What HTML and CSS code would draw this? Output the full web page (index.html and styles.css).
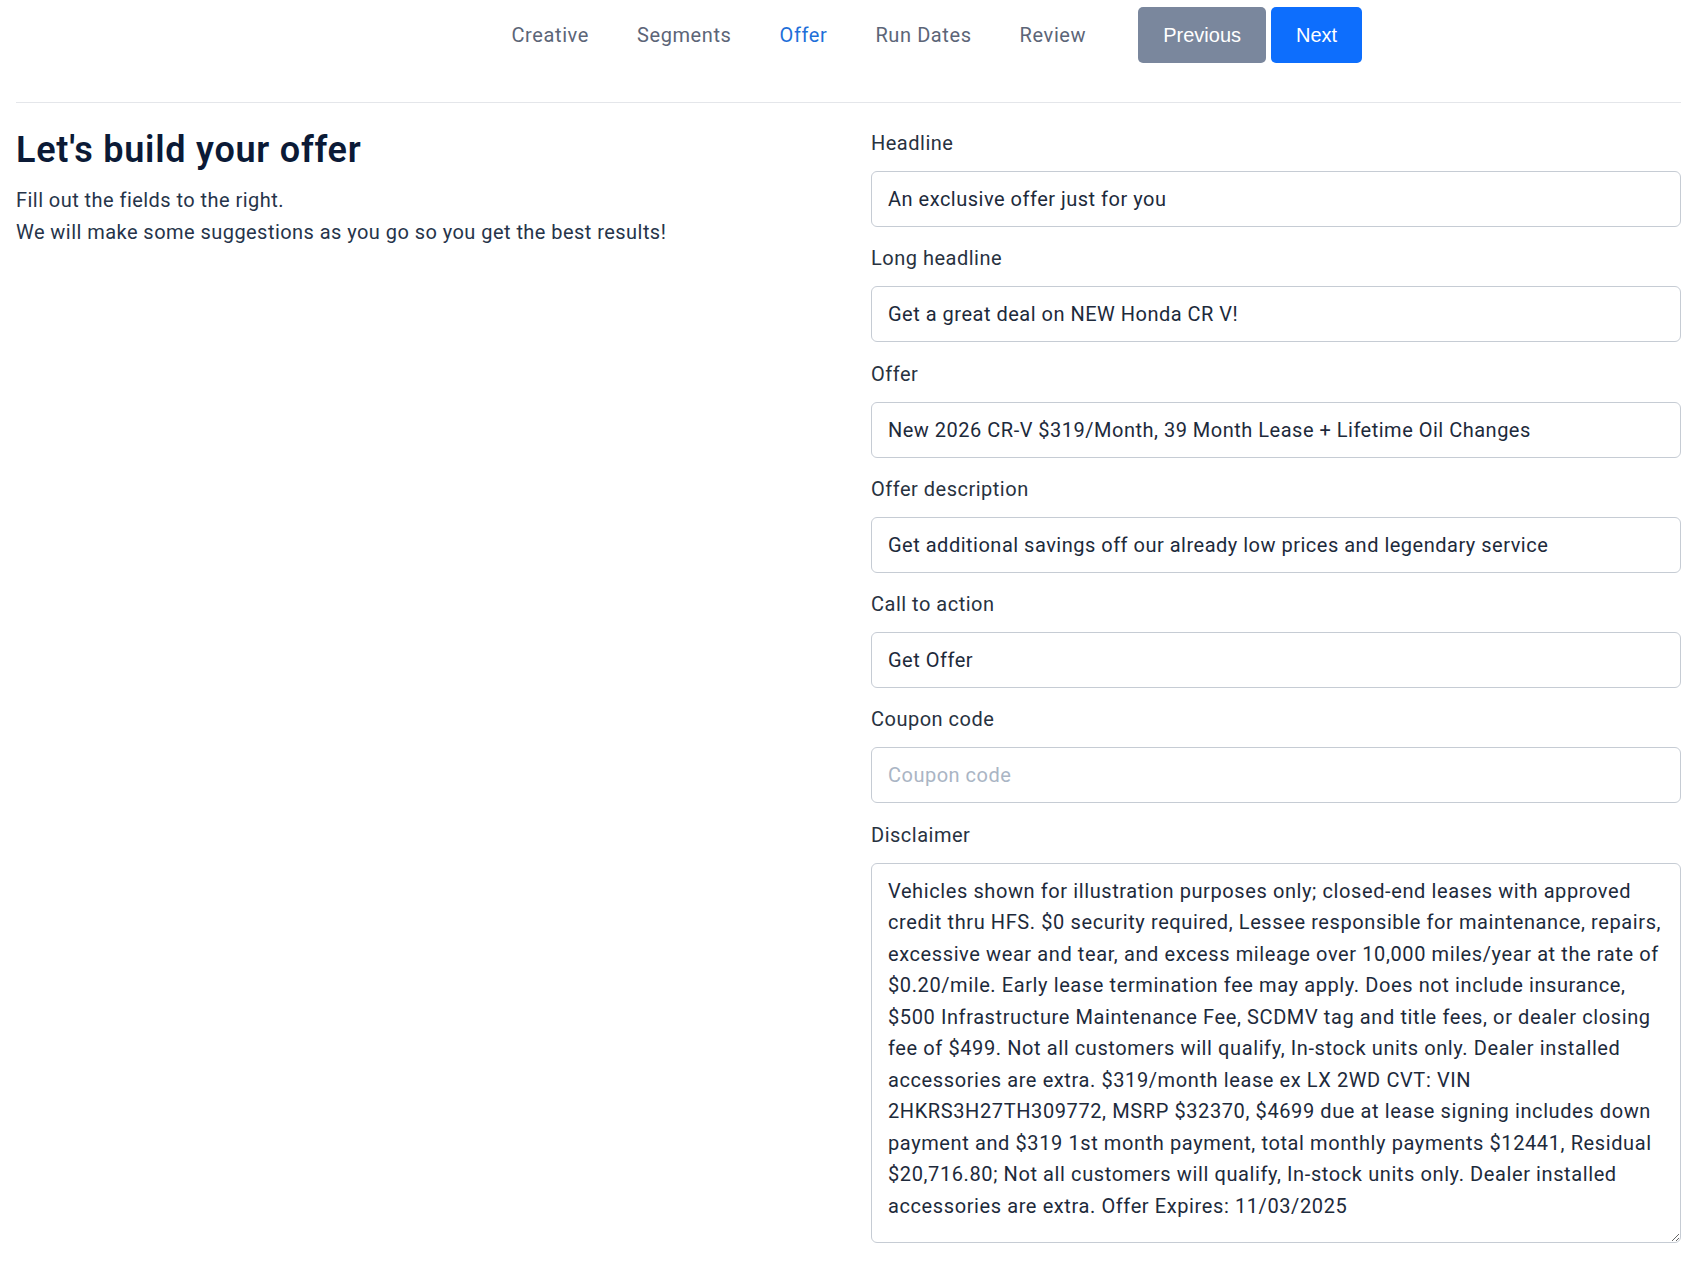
FILE: index.html
```html
<!DOCTYPE html>
<html lang="en">
<head>
<meta charset="utf-8">
<title>Offer</title>
<link rel="stylesheet" href="styles.css">
</head>
<body>
<div class="page">
  <header class="topbar">
    <nav class="steps">
      <a class="step" href="#">Creative</a>
      <a class="step" href="#">Segments</a>
      <a class="step active" href="#">Offer</a>
      <a class="step" href="#">Run Dates</a>
      <a class="step" href="#">Review</a>
    </nav>
    <div class="actions">
      <button class="btn btn-prev" type="button">Previous</button>
      <button class="btn btn-next" type="button">Next</button>
    </div>
  </header>

  <main class="content">
    <section class="intro">
      <h1 class="title">Let's build your offer</h1>
      <p class="lead">Fill out the fields to the right.<br>We will make some suggestions as you go so you get the best results!</p>
    </section>

    <form class="fields">
      <div class="field">
        <label class="label">Headline</label>
        <input class="input" type="text" value="An exclusive offer just for you">
      </div>
      <div class="field">
        <label class="label">Long headline</label>
        <input class="input" type="text" value="Get a great deal on NEW Honda CR V!">
      </div>
      <div class="field">
        <label class="label">Offer</label>
        <input class="input" type="text" value="New 2026 CR-V $319/Month, 39 Month Lease + Lifetime Oil Changes">
      </div>
      <div class="field">
        <label class="label">Offer description</label>
        <input class="input" type="text" value="Get additional savings off our already low prices and legendary service">
      </div>
      <div class="field">
        <label class="label">Call to action</label>
        <input class="input" type="text" value="Get Offer">
      </div>
      <div class="field">
        <label class="label">Coupon code</label>
        <input class="input" type="text" placeholder="Coupon code">
      </div>
      <div class="field">
        <label class="label">Disclaimer</label>
        <textarea class="input area" wrap="off">Vehicles shown for illustration purposes only; closed-end leases with approved
credit thru HFS. $0 security required, Lessee responsible for maintenance, repairs,
excessive wear and tear, and excess mileage over 10,000 miles/year at the rate of
$0.20/mile. Early lease termination fee may apply. Does not include insurance,
$500 Infrastructure Maintenance Fee, SCDMV tag and title fees, or dealer closing
fee of $499. Not all customers will qualify, In-stock units only. Dealer installed
accessories are extra. $319/month lease ex LX 2WD CVT: VIN
2HKRS3H27TH309772, MSRP $32370, $4699 due at lease signing includes down
payment and $319 1st month payment, total monthly payments $12441, Residual
$20,716.80; Not all customers will qualify, In-stock units only. Dealer installed
accessories are extra. Offer Expires: 11/03/2025</textarea>
      </div>
    </form>
  </main>
</div>
</body>
</html>
```
FILE: styles.css
```css
* { box-sizing: border-box; }

html, body {
  margin: 0;
  padding: 0;
  background: #ffffff;
}

body {
  font-family: Roboto, "Liberation Sans", Arial, sans-serif;
  font-size: 20px;
  color: #26344a;
}

.page {
  padding: 0 21px 0 16px;
}

.topbar {
  display: flex;
  align-items: center;
  padding: 7px 0 39px 471.5px;
  border-bottom: 1px solid #e4e6ea;
}

.steps {
  display: flex;
  align-items: center;
}

.step {
  padding: 0 24px;
  color: #5c6577;
  text-decoration: none;
  font-size: 20px;
  line-height: 32px;
  letter-spacing: 0.6px;
}

.step.active {
  color: #1e6fd9;
}

.actions {
  display: flex;
  gap: 5px;
  margin-left: 28px;
}

.btn {
  height: 56px;
  padding: 0 25px;
  border: none;
  border-radius: 5px;
  font-family: "Liberation Sans", Arial, sans-serif;
  font-size: 20px;
  color: #ffffff;
  cursor: pointer;
}

.btn-prev { background: #7a879d; }
.btn-next { background: #0d6efd; }

.content {
  display: grid;
  grid-template-columns: 1fr 1fr;
  column-gap: 45px;
  padding-top: 24px;
}

.title {
  margin: 2px 0 12px;
  font-size: 36px;
  line-height: 43px;
  font-weight: 600;
  color: #0b1a36;
  letter-spacing: 0.75px;
}

.lead {
  margin: 0;
  font-size: 20px;
  line-height: 32px;
  color: #26344a;
  letter-spacing: 0.45px;
}

.fields {
  display: flex;
  flex-direction: column;
}

.field {
  display: flex;
  flex-direction: column;
  margin-bottom: 15.3px;
}

.label {
  font-size: 20px;
  line-height: 32px;
  margin-bottom: 12px;
  color: #28323f;
  letter-spacing: 0.5px;
}

.input {
  width: 100%;
  height: 56px;
  padding: 12px 16px;
  border: 1px solid #c6ccd4;
  border-radius: 6px;
  font-family: Roboto, "Liberation Sans", Arial, sans-serif;
  font-size: 20px;
  line-height: 30px;
  color: #1d2a3b;
  background: #ffffff;
  letter-spacing: 0.5px;
  outline: none;
}

.input::placeholder {
  color: #aab5c4;
}

.area {
  height: 380px;
  line-height: 31.5px;
  padding: 12px 16px;
  resize: vertical;
  overflow: hidden;
  white-space: pre;
  letter-spacing: 0.6px;
}
```
